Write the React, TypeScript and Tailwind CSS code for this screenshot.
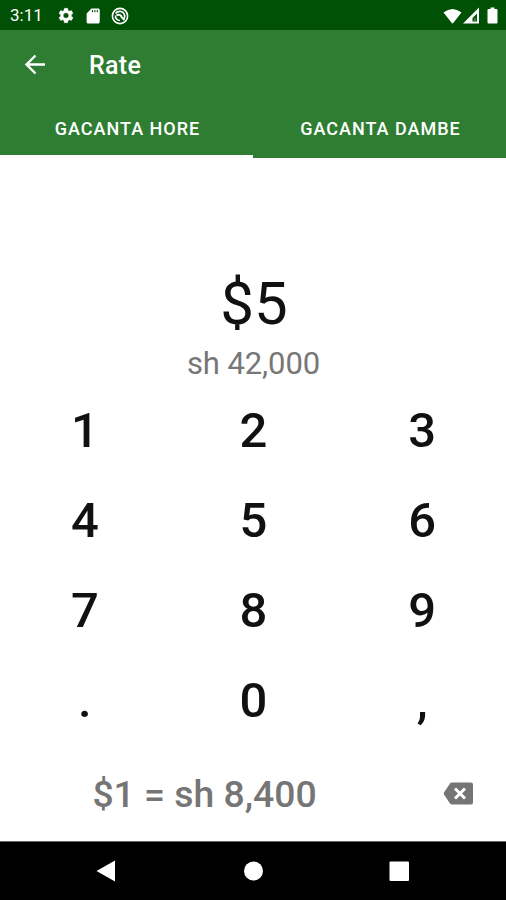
import React from "react";

const keys = ["1", "2", "3", "4", "5", "6", "7", "8", "9", ".", "0", ","];

function StatusBar() {
  return (
    <div className="flex h-[30px] items-center bg-[#005005] pl-[10px] pr-[8px] pt-[1px] text-white">
      <span className="w-[47px] pt-px text-[17px]">3:11</span>
      <svg className="h-[19px] w-[18px]" viewBox="0 0 24 24" fill="currentColor" stroke="currentColor" strokeWidth="0.5">
        <path d="M19.14 12.94c.04-.3.06-.61.06-.94s-.02-.64-.07-.94l2.03-1.58a.49.49 0 0 0 .12-.61l-1.92-3.32a.49.49 0 0 0-.59-.22l-2.39.96a7 7 0 0 0-1.62-.94l-.36-2.54a.48.48 0 0 0-.48-.41h-3.84a.47.47 0 0 0-.47.41l-.36 2.54c-.59.24-1.13.57-1.62.94l-2.39-.96a.48.48 0 0 0-.59.22L2.74 8.87a.47.47 0 0 0 .12.61l2.03 1.58a7.9 7.9 0 0 0 0 1.88l-2.03 1.58a.49.49 0 0 0-.12.61l1.92 3.32c.12.22.37.29.59.22l2.39-.96c.5.38 1.03.7 1.62.94l.36 2.54c.05.24.24.41.48.41h3.84c.24 0 .44-.17.47-.41l.36-2.54a7 7 0 0 0 1.62-.94l2.39.96c.22.08.47 0 .59-.22l1.92-3.32a.47.47 0 0 0-.12-.61zM12 15.6a3.6 3.6 0 1 1 0-7.2 3.6 3.6 0 0 1 0 7.2z" />
      </svg>
      <svg className="ml-[9px] h-[18px] w-[18px]" viewBox="0 0 24 24" fill="currentColor">
        <path d="M19 2h-9L3.500 8.500V20c0 1.100.9 2 2 2H19c1.100 0 2-.9 2-2V4c0-1.100-.9-2-2-2zm-7 5h-1.500V4H12v3zm3.300 0h-1.500V4h1.500v3zm3.200 0H17V4h1.500v3z" />
      </svg>
      <svg className="ml-[9px] h-[18px] w-[18px]" viewBox="0 0 18 18" fill="none" stroke="currentColor" strokeWidth="1.6">
        <circle cx="9" cy="9" r="7.6" />
        <path d="M4.500 6.500C7 3.500 11.500 3.800 13.100 6.800c1 2 .5 4-.6 5.200M4.600 8.500c-.5 2.800 1.500 5 4.400 5" />
        <path d="M5.500 8.500c2.500-1.700 4.500-.5 5 1.500l3 3" strokeWidth="2" />
      </svg>
      <svg className="ml-auto h-[18px] w-[19px]" viewBox="0 0 19 18" fill="currentColor"><path d="M.5 5.500Q9.500-1.500 18.500 5.500L10.200 16q-.7.800-1.400 0Z" /></svg>
      <svg className="ml-[1px] h-[18px] w-[16px]" viewBox="0 0 16 18" fill="currentColor"><path d="M0 16.500 16 .500v16Zm9.500-2h4.500V6.500l-4.500 4.500Z" fillRule="evenodd" /><path d="M11.300 11h1.500v3h-1.500Z" opacity=".35" /></svg>
      <svg className="ml-[8px] h-[18px] w-[11px]" viewBox="0 0 11 18" fill="currentColor"><path d="M3.500 .5h4V2h2q1 0 1 1v12.500q0 1-1 1h-8q-1 0-1-1V3q0-1 1-1h2Z" /></svg>
    </div>
  );
}

export default function App() {
  return (
    <main className="flex h-[900px] w-[506px] flex-col bg-white font-['Roboto',sans-serif] text-[#111]">
      <StatusBar />
      <header className="h-[128px] bg-[#2e7d32] text-white">
        <div className="flex h-[70px] items-center pl-[23px]">
          <svg className="h-[24px] w-[24px]" viewBox="0 0 24 24" fill="none" stroke="currentColor" strokeWidth="2.400"><path d="M22 11.500H4M12.500 2.500l-9 9 9 9" /></svg>
          <h1 className="ml-[42px] pt-[2px] text-[25px] font-medium tracking-[0.3px]">Rate</h1>
        </div>
        <div className="grid h-[58px] grid-cols-2 text-center text-[18px] font-medium tracking-[1px]">
          <div className="border-b-[3px] border-[#fafafa] pl-[2px] pt-[15px]">GACANTA HORE</div>
          <div className="pl-[2px] pt-[15px]">GACANTA DAMBE</div>
        </div>
      </header>
      <section className="flex h-[228px] flex-col items-center pt-[110px]">
        <div className="pl-[2px] text-[60px] leading-[72px]">$5</div>
        <div className="mt-[6px] pl-[1px] text-[31px] leading-[36px] tracking-[-0.1px] text-[#777]">sh 42,000</div>
      </section>
      <section className="grid h-[360px] grid-cols-3 grid-rows-4 text-[49px] font-medium">
        {keys.map(k => <button key={k} className="pl-px leading-[90px]">{k}</button>)}
      </section>
      <section className="flex h-[95px] items-center">
        <div className="w-[409px] pt-[3px] text-center text-[37.300px] font-medium text-[#757575]">$1 = sh 8,400</div>
        <svg className="ml-[34px] h-[24px] w-[31px]" viewBox="0 0 31 24"><path d="M9 .5h19q2 0 2 2v18q0 2-2 2H9q-1 0-2-1L1 12.500q-.5-1 0-2L7 1.500q1-1 2-1Z" fill="#757575" /><path d="m12 6.500 10 10m0-10-10 10" stroke="white" strokeWidth="3" /></svg>
      </section>
      <nav className="h-[59px] border-t border-[#666] bg-black">
        <svg className="h-[58px] w-full" viewBox="0 0 506 58" fill="white"><path d="M96.500 29 115 18.500v21Z" /><circle cx="253.500" cy="29" r="9.500" /><rect x="389.500" y="19.500" width="19.500" height="19.500" rx="1" /></svg>
      </nav>
    </main>
  );
}
